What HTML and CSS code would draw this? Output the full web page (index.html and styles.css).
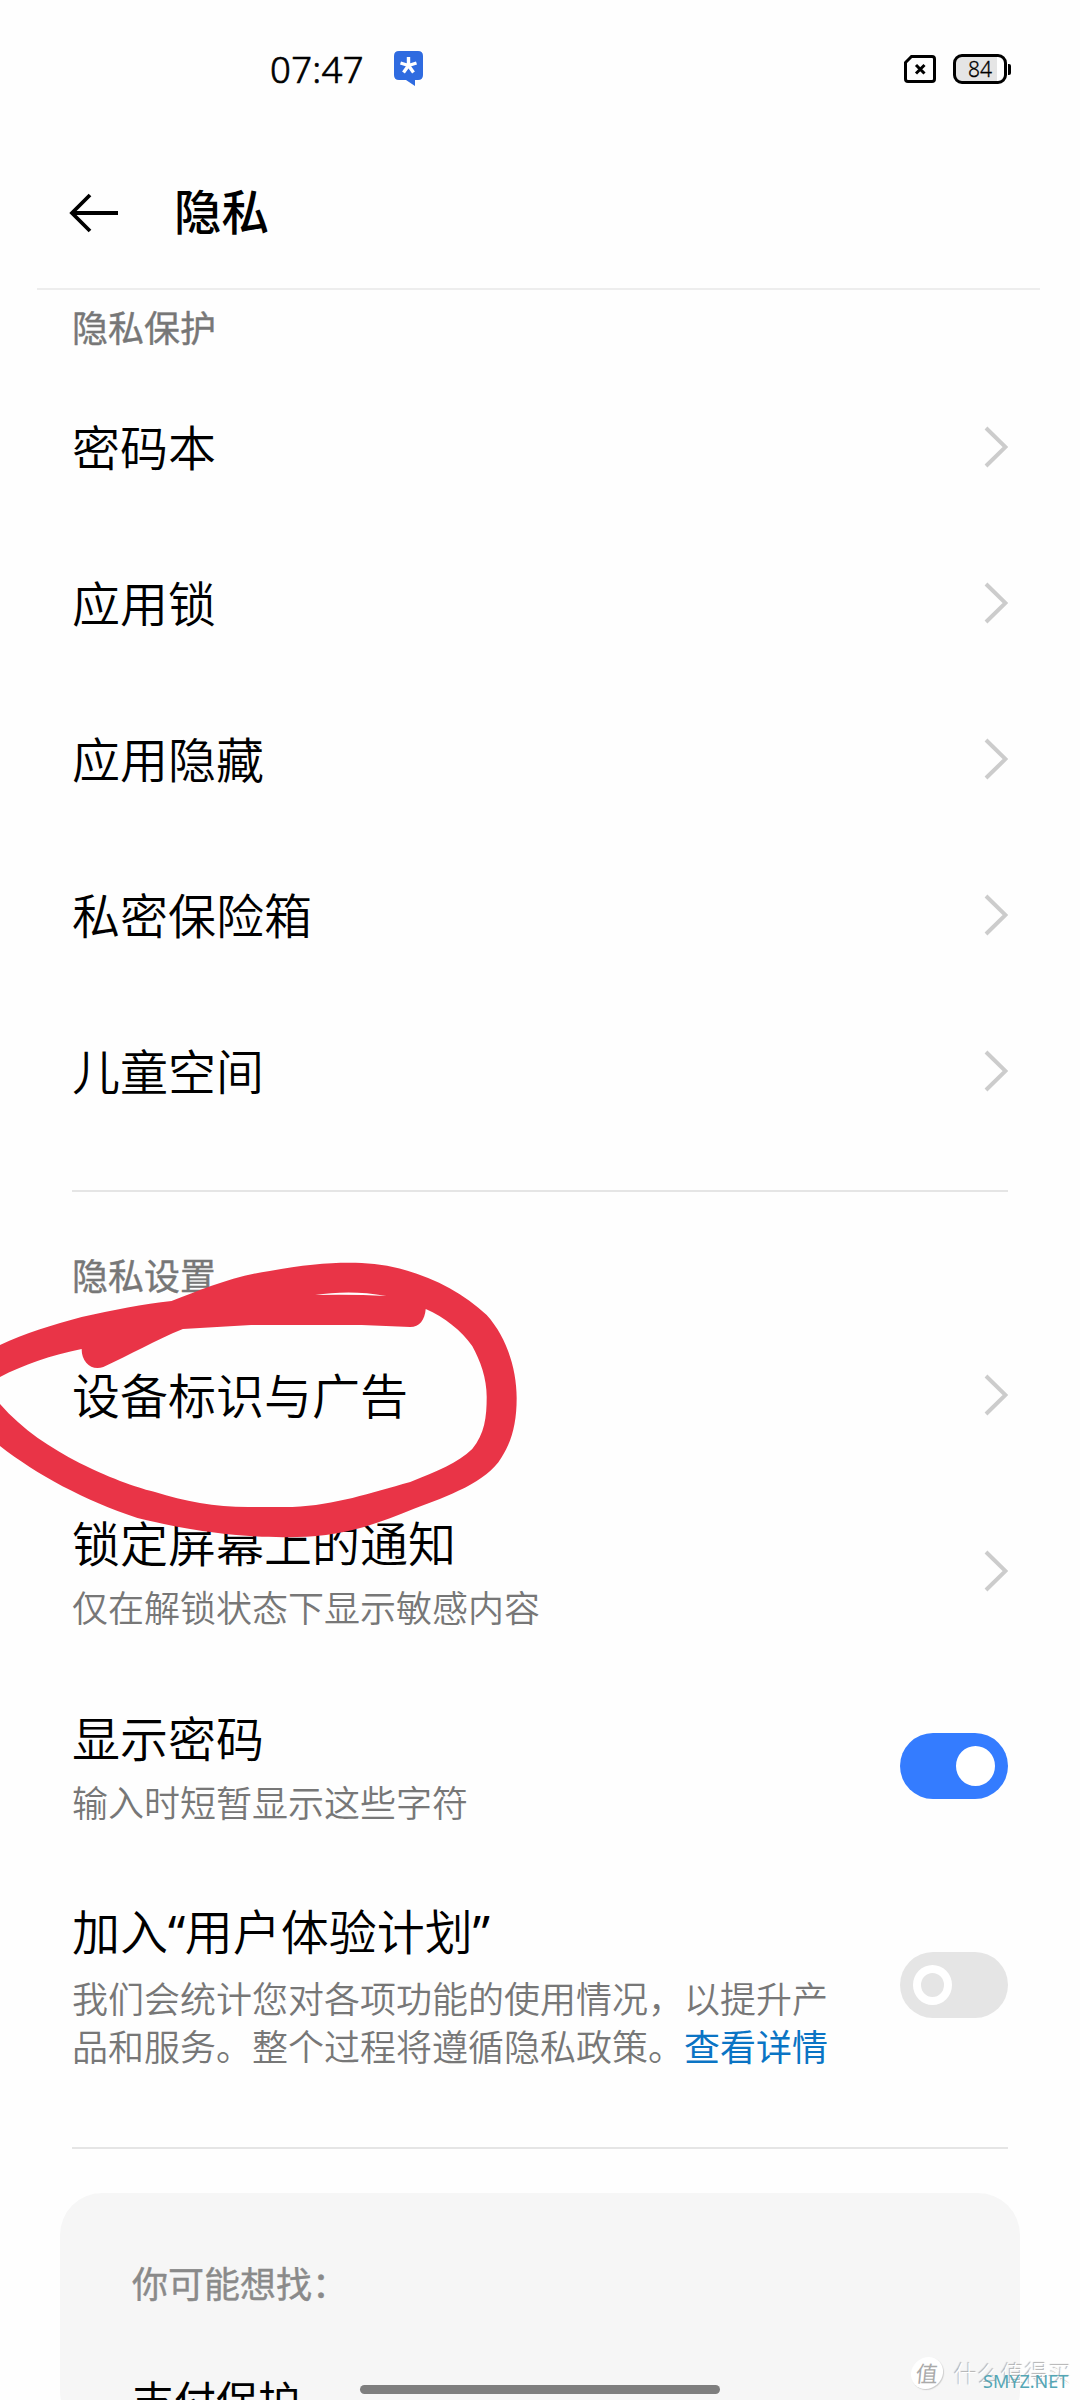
FILE: index.html
```html
<!DOCTYPE html>
<html lang="zh-CN">
<head>
<meta charset="utf-8">
<title>隐私</title>
<link rel="stylesheet" href="styles.css">
</head>
<body>
<svg class="defs" width="0" height="0"><symbol id="chevron" viewBox="0 0 24 42"><path d="M2 2 L21.500 21 L2 40" fill="none" stroke="#cccccc" stroke-width="4"/></symbol></svg>
<div class="screen">
  <div class="status">
    <span class="time">07:47</span>
    <svg class="bubble" width="30" height="36" viewBox="0 0 30 36"><path d="M5 0H24Q29 0 29 5V24Q29 29 24 29H21V35L12 29H5Q0 29 0 24V5Q0 0 5 0Z" fill="#2f6be0"/><path d="M14.5 14.5V6M14.5 14.5L22.5 12M14.5 14.5L19.5 21.5M14.5 14.5L9.5 21.5M14.5 14.5L6.5 12" stroke="#fff" stroke-width="3.4"/></svg>
    <svg class="sim" width="32" height="28" viewBox="0 0 32 28"><path d="M7.5 1.5H28Q30.5 1.5 30.5 4V24Q30.5 26.5 28 26.5H4Q1.500 26.500 1.500 24V7.500Z" fill="none" stroke="#000" stroke-width="3"/><path d="M12 10L20.500 18.500M20.500 10L12 18.500" stroke="#000" stroke-width="3"/></svg>
    <div class="battery"><span>84</span></div><i class="nub"></i>
  </div>
  <header class="header">
    <svg class="back" width="50" height="40" viewBox="0 0 50 40"><path d="M49 20H3M21 2L3 20L21 38" fill="none" stroke="#000" stroke-width="3.800"/></svg>
    <h1>隐私</h1>
  </header>
  <main>
    <h2 class="label first">隐私保护</h2>
    <div class="row"><div class="title">密码本</div><svg class="chev"><use href="#chevron"/></svg></div>
    <div class="row"><div class="title">应用锁</div><svg class="chev"><use href="#chevron"/></svg></div>
    <div class="row"><div class="title">应用隐藏</div><svg class="chev"><use href="#chevron"/></svg></div>
    <div class="row"><div class="title">私密保险箱</div><svg class="chev"><use href="#chevron"/></svg></div>
    <div class="row"><div class="title">儿童空间</div><svg class="chev"><use href="#chevron"/></svg></div>
    <hr>
    <h2 class="label second">隐私设置</h2>
    <div class="row"><div class="title">设备标识与广告</div><svg class="chev"><use href="#chevron"/></svg></div>
    <div class="row double"><div><div class="title">锁定屏幕上的通知</div><p>仅在解锁状态下显示敏感内容</p></div><svg class="chev"><use href="#chevron"/></svg></div>
    <div class="row double"><div><div class="title">显示密码</div><p>输入时短暂显示这些字符</p></div><div class="toggle on"><i></i></div></div>
    <div class="row triple"><div><div class="title">加入<span class="quote">“</span>用户体验计划<span class="quote">”</span></div><p>我们会统计您对各项功能的使用情况，以提升产<br>品和服务。整个过程将遵循隐私政策。<a>查看详情</a></p></div><div class="toggle"><i></i></div></div>
    <hr>
    <section class="card"><h2>你可能想找：</h2><div class="suggestion">支付保护</div></section>
  </main>
  <svg class="marker" width="527" height="290" viewBox="0 1255 510 290" preserveAspectRatio="none">
    <path fill="#e93447" fill-rule="evenodd" d="M0 1345C24 1333 51 1325 79 1317C109 1310 139 1304 166 1301C194 1290 226 1276 261 1271C297 1264 325 1262 350 1263C396 1265 441 1286 471 1315C491 1338 500 1370 500 1398C500 1424 495 1442 485 1458C471 1482 434 1496 400 1509C361 1526 326 1537 287 1537C255 1538 204 1536 133 1518C81 1500 36 1475 0 1446V1404C22 1430 49 1448 77 1463C110 1480 137 1489 150 1492C178 1501 208 1507 240 1507H283C325 1505 358 1493 397 1482C423 1471 443 1463 457 1449C469 1434 471 1417 471 1397C471 1378 465 1361 457 1346C447 1331 430 1317 412 1309C411 1320 406 1327 397 1327L350 1325H243L177 1329C150 1340 126 1355 100 1367C89 1371 79 1363 79 1349C50 1355 22 1365 0 1377ZM305 1295C325 1292 348 1291 374 1296Q340 1294 305 1295Z"/>
  </svg>
  <div class="homebar"></div>
  <div class="watermark"><span class="seal">值</span><span class="brand">什么值得买</span><span class="site">SMYZ.NET</span></div>
</div>
</body>
</html>
```
FILE: styles.css
```css
* { box-sizing: border-box; }
body { margin: 0; background: #fefefe; font-family: "Noto Sans CJK SC", "Noto Sans", sans-serif; color: #000; }
.defs { position: absolute; }
.screen { position: relative; width: 1080px; height: 2400px; overflow: hidden; }
h1, h2, p { margin: 0; }
.status { display: flex; align-items: center; height: 138px; padding: 0 69px 0 270px; }
.time { width: 124px; padding-bottom: 1px; font: 300 36.5px/50px "Noto Sans", sans-serif; letter-spacing: 0.3px; -webkit-text-stroke: 0.7px #000; }
.bubble { margin-right: auto; }
.sim { margin-right: 17px; }
.battery { width: 54px; height: 30px; border: 3px solid #000; border-radius: 9px; background: linear-gradient(90deg, #e5e5e5 41px, #fff 41px); text-align: center; font: 300 21px/25px "Noto Sans", sans-serif; -webkit-text-stroke: 0.3px #000; }
.nub { width: 3px; height: 11px; margin-left: 1px; background: #000; border-radius: 0 2px 2px 0; }
.header { display: flex; align-items: center; height: 152px; margin: 0 40px 0 37px; padding-left: 32px; border-bottom: 2px solid #ededed; }
.header h1 { margin-left: 55px; padding-bottom: 6px; font-size: 47.5px; line-height: 60px; font-weight: 500; }
main { padding: 0 72px; }
.label { font-size: 36px; line-height: 48px; font-weight: 400; color: #777; -webkit-text-stroke: 0.4px #777; }
.first { height: 79px; padding-top: 12px; }
.second { height: 125px; padding-top: 58px; }
.row { display: flex; align-items: center; justify-content: space-between; height: 156px; }
.title { font-size: 48px; line-height: 64px; font-weight: 350; padding-bottom: 5px; }
.quote { font-family: "Noto Sans", sans-serif; font-weight: 400; letter-spacing: -0.5px; }
.chev { width: 24px; height: 42px; flex: none; }
.double { height: 195px; }
.double .title, .triple .title { padding-bottom: 9px; margin-top: -3px; }
.triple { height: 243px; }
.row p { font-size: 36px; line-height: 48px; font-weight: 350; color: #777; white-space: nowrap; }
.row a { color: #0a74c4; font-weight: 400; }
hr { height: 2px; border: 0; margin: 41px 0 0; background: #e5e5e5; }
.toggle { width: 108px; height: 66px; flex: none; border-radius: 33px; background: #e5e5e5; padding: 13px; display: flex; }
.toggle i { width: 39px; height: 40px; border-radius: 50%; border: 8px solid #fff; }
.toggle.on { background: #347cff; justify-content: flex-end; }
.toggle.on i { background: #fff; }
.card { margin: 44px -12px 0 -12px; height: 240px; border-radius: 42px; background: #f6f6f6; padding: 65px 72px; }
.card h2 { font-size: 36px; line-height: 48px; font-weight: 400; color: #8a8a8a; -webkit-text-stroke: 0.4px #8a8a8a; }
.suggestion { margin-top: 63px; font-size: 42px; line-height: 60px; }
.marker { position: absolute; left: 0; top: 1255px; }
.homebar { position: absolute; left: 360px; top: 2385px; width: 360px; height: 9px; border-radius: 5px; background: #7e7e7e; }
.watermark { position: absolute; left: 911px; top: 2356px; display: flex; align-items: center; height: 34px; }
.seal { width: 32px; height: 32px; border-radius: 50%; background: #fff; box-shadow: 1px 1px 1px #ccc; color: #aaa; font-size: 22px; line-height: 30px; text-align: center; transform: skewX(-6deg); }
.brand { margin-left: 11px; font-size: 23.5px; line-height: 32px; font-weight: 300; color: #fff; text-shadow: -1px -1px 1px #aaa; }
.site { position: absolute; left: 72px; top: 13px; font: 18px/24px "Noto Sans", sans-serif; color: #53a6b5; }
```
